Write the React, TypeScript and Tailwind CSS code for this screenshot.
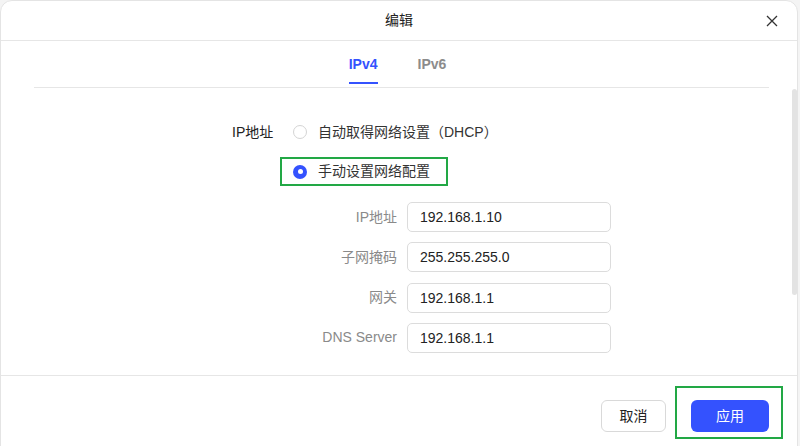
import React, { useState } from 'react';

const font = { fontFamily: '"Liberation Sans", "Noto Sans CJK SC", sans-serif' };

const Radio: React.FC<{ checked: boolean }> = ({ checked }) =>
  checked ? (
    <span className="flex h-[14px] w-[14px] shrink-0 items-center justify-center rounded-full bg-[#3452fe]">
      <span className="h-[5px] w-[5px] rounded-full bg-white" />
    </span>
  ) : (
    <span className="block h-[14px] w-[14px] shrink-0 rounded-full border border-[#d4d4d4] bg-white" />
  );

const Field: React.FC<{ label: string; value: string }> = ({ label, value }) => (
  <div className="flex items-center">
    <label className="w-[165px] whitespace-nowrap text-right text-[14px] text-[#8a8a8a]">{label}</label>
    <input
      defaultValue={value}
      className="ml-[10px] h-[30px] w-[204px] rounded-[5px] border border-[#dcdcdc] px-[12px] text-[14px] text-[#222] outline-none"
      style={font}
    />
  </div>
);

const App: React.FC = () => {
  const [tab, setTab] = useState('IPv4');

  return (
    <div className="h-[446px] w-[800px] overflow-hidden bg-[#f4f4f4]" style={font}>
      <div className="flex h-[460px] w-[798px] flex-col rounded-t-[12px] border border-[#e4e4e4] bg-white">
        {/* header */}
        <div className="relative flex h-[40px] shrink-0 items-center justify-center border-b border-[#e6e6e6]">
          <span className="text-[14px] text-[#222]">编辑</span>
          <button className="absolute right-[19px] top-[14px]">
            <svg width="12" height="12" viewBox="0 0 12 12">
              <path d="M1 1 L11 11 M11 1 L1 11" stroke="#333" strokeWidth="1.3" />
            </svg>
          </button>
        </div>

        {/* body */}
        <div className="relative h-[334px] shrink-0 pl-[33px] pr-[28px]">
          <div className="flex justify-center gap-[40px] border-b border-[#e6e6e6] pr-[8px] pt-[13px] pb-[3px]">
            {['IPv4', 'IPv6'].map((t) => (
              <button key={t} onClick={() => setTab(t)} className="flex flex-col items-stretch">
                <span
                  className={`text-[14px] font-bold leading-[20px] ${
                    tab === t ? 'text-[#3452fe]' : 'text-[#8c8c8c]'
                  }`}
                >
                  {t}
                </span>
                <span className={`mt-[8px] h-[2px] ${tab === t ? 'bg-[#3452fe]' : 'bg-transparent'}`} />
              </button>
            ))}
          </div>

          <div className="ml-[198px] mt-[34px]">
            <div className="flex h-[20px] items-center whitespace-nowrap text-[14px] text-[#222]">
              <span className="w-[41px] shrink-0">IP地址</span>
              <span className="ml-[20px] shrink-0">
                <Radio checked={false} />
              </span>
              <span className="ml-[11px] text-[#333]">自动取得网络设置（DHCP）</span>
            </div>
            <div className="ml-[48px] mt-[15px] flex h-[29px] w-[168px] items-center whitespace-nowrap border-2 border-[#22a845] pl-[11px] text-[14px] text-[#333]">
              <Radio checked />
              <span className="ml-[11px]">手动设置网络配置</span>
            </div>

            <div className="mt-[16px] flex flex-col gap-[10.3px]">
              <Field label="IP地址" value="192.168.1.10" />
              <Field label="子网掩码" value="255.255.255.0" />
              <Field label="网关" value="192.168.1.1" />
              <Field label="DNS Server" value="192.168.1.1" />
            </div>
          </div>

          {/* scrollbar thumb */}
          <div className="absolute right-[0px] top-[48px] h-[206px] w-[5px] rounded-full bg-[#e3e3e3]" />
        </div>

        {/* footer */}
        <div className="flex flex-1 items-start justify-end gap-[25px] border-t border-[#e6e6e6] pr-[28px] pt-[24px]">
          <button className="h-[32px] w-[65px] rounded-[6px] border border-[#d9d9d9] bg-white text-[14px] text-[#222]">
            取消
          </button>
          <div className="relative h-[32px]">
            <button className="h-[32px] w-[78px] rounded-[6px] bg-[#3452fe] text-[14px] text-white">应用</button>
            <div className="pointer-events-none absolute -left-[16px] -right-[14px] -top-[14px] -bottom-[7px] border-2 border-[#22a845]" />
          </div>
        </div>
      </div>
    </div>
  );
};

export default App;
